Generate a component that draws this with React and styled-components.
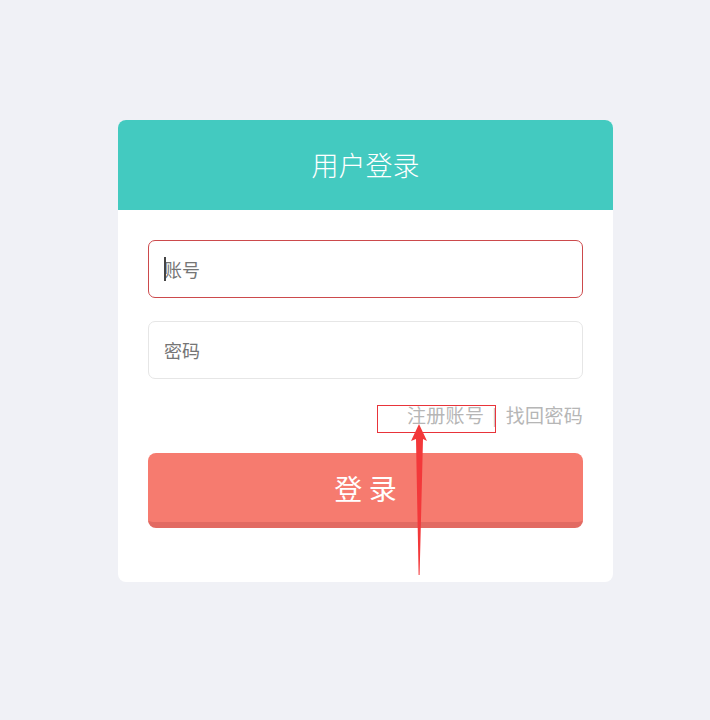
import React from "react";
import styled, { createGlobalStyle } from "styled-components";

const GlobalStyle = createGlobalStyle`
	html, body {
		margin: 0;
		padding: 0;
		background: #f0f1f6;
		font-family: "Noto Sans CJK SC", "Noto Sans", sans-serif;
	}
`;

function App() {
	return (
		<Page>
			<GlobalStyle />
			<Card>
				<Header>
					<h2>用户登录</h2>
				</Header>
				<Body>
					<Field active>
						<Caret />
						<input type="text" placeholder="账号" />
					</Field>
					<Field>
						<input type="password" placeholder="密码" />
					</Field>
					<Links>
						<a href="#">注册账号</a>
						<Sep>|</Sep>
						<a href="#">找回密码</a>
					</Links>
					<LoginButton>登 录</LoginButton>
				</Body>
				<Highlight />
				<Arrow width="30" height="160" viewBox="0 0 30 160">
					<polygon
						points="14,4 22,21 18,19 14.6,155 13.6,155 11,19 6,21"
						fill="#f3383a"
					/>
				</Arrow>
			</Card>
		</Page>
	);
}

export default App;

const Page = styled.div`
	padding: 120px 0 139px 118px;
`;
const Card = styled.div`
	position: relative;
	width: 495px;
	background: #fff;
	border-radius: 8px;
	overflow: hidden;
`;
const Header = styled.div`
	height: 90px;
	background: #43cac0;
	display: flex;
	align-items: center;
	justify-content: center;

	h2 {
		margin: 0 0 2px;
		color: #fff;
		font-size: 27px;
		font-weight: 300;
	}
`;
const Body = styled.div`
	padding: 30px 30px 54px;
	display: flex;
	flex-direction: column;
`;
const Field = styled.div`
	position: relative;
	height: 58px;
	margin-bottom: ${(p) => (p.active ? "23px" : "0")};
	border: 1px solid ${(p) => (p.active ? "#cc4a4c" : "#e6e6e6")};
	border-radius: 7px;
	box-sizing: border-box;

	input {
		width: 100%;
		height: 100%;
		box-sizing: border-box;
		border: none;
		outline: none;
		background: transparent;
		padding: 0 15px;
		font-size: 18px;
		font-family: "Noto Sans CJK SC", sans-serif;
		color: #333;

		::placeholder {
			color: #a0a0a0;
		}
	}
`;
const Caret = styled.span`
	position: absolute;
	left: 15px;
	top: 16px;
	width: 2px;
	height: 24px;
	background: #444;
`;
const Links = styled.div`
	display: flex;
	justify-content: flex-end;
	align-items: center;
	height: 28px;
	margin: 21px 0 25px;

	a {
		text-decoration: none;
		color: #b6b6b6;
		font-size: 19px;
		letter-spacing: 0.3px;
	}
`;
const Sep = styled.span`
	color: #bdbdbd;
	font-size: 17px;
	margin: 0 9px 0 8px;
`;
const LoginButton = styled.button`
	height: 75px;
	border: none;
	border-bottom: 6px solid #e26a62;
	border-radius: 8px;
	background: #f67b6f;
	color: #fff;
	font-size: 28px;
	font-family: "Noto Sans CJK SC", sans-serif;
	cursor: pointer;
	padding: 0;
`;
const Highlight = styled.div`
	position: absolute;
	left: 259px;
	top: 285px;
	width: 119px;
	height: 28px;
	box-sizing: border-box;
	border: 1px solid #e8343a;
	pointer-events: none;
`;
const Arrow = styled.svg`
	position: absolute;
	left: 287px;
	top: 300px;
	pointer-events: none;
`;
